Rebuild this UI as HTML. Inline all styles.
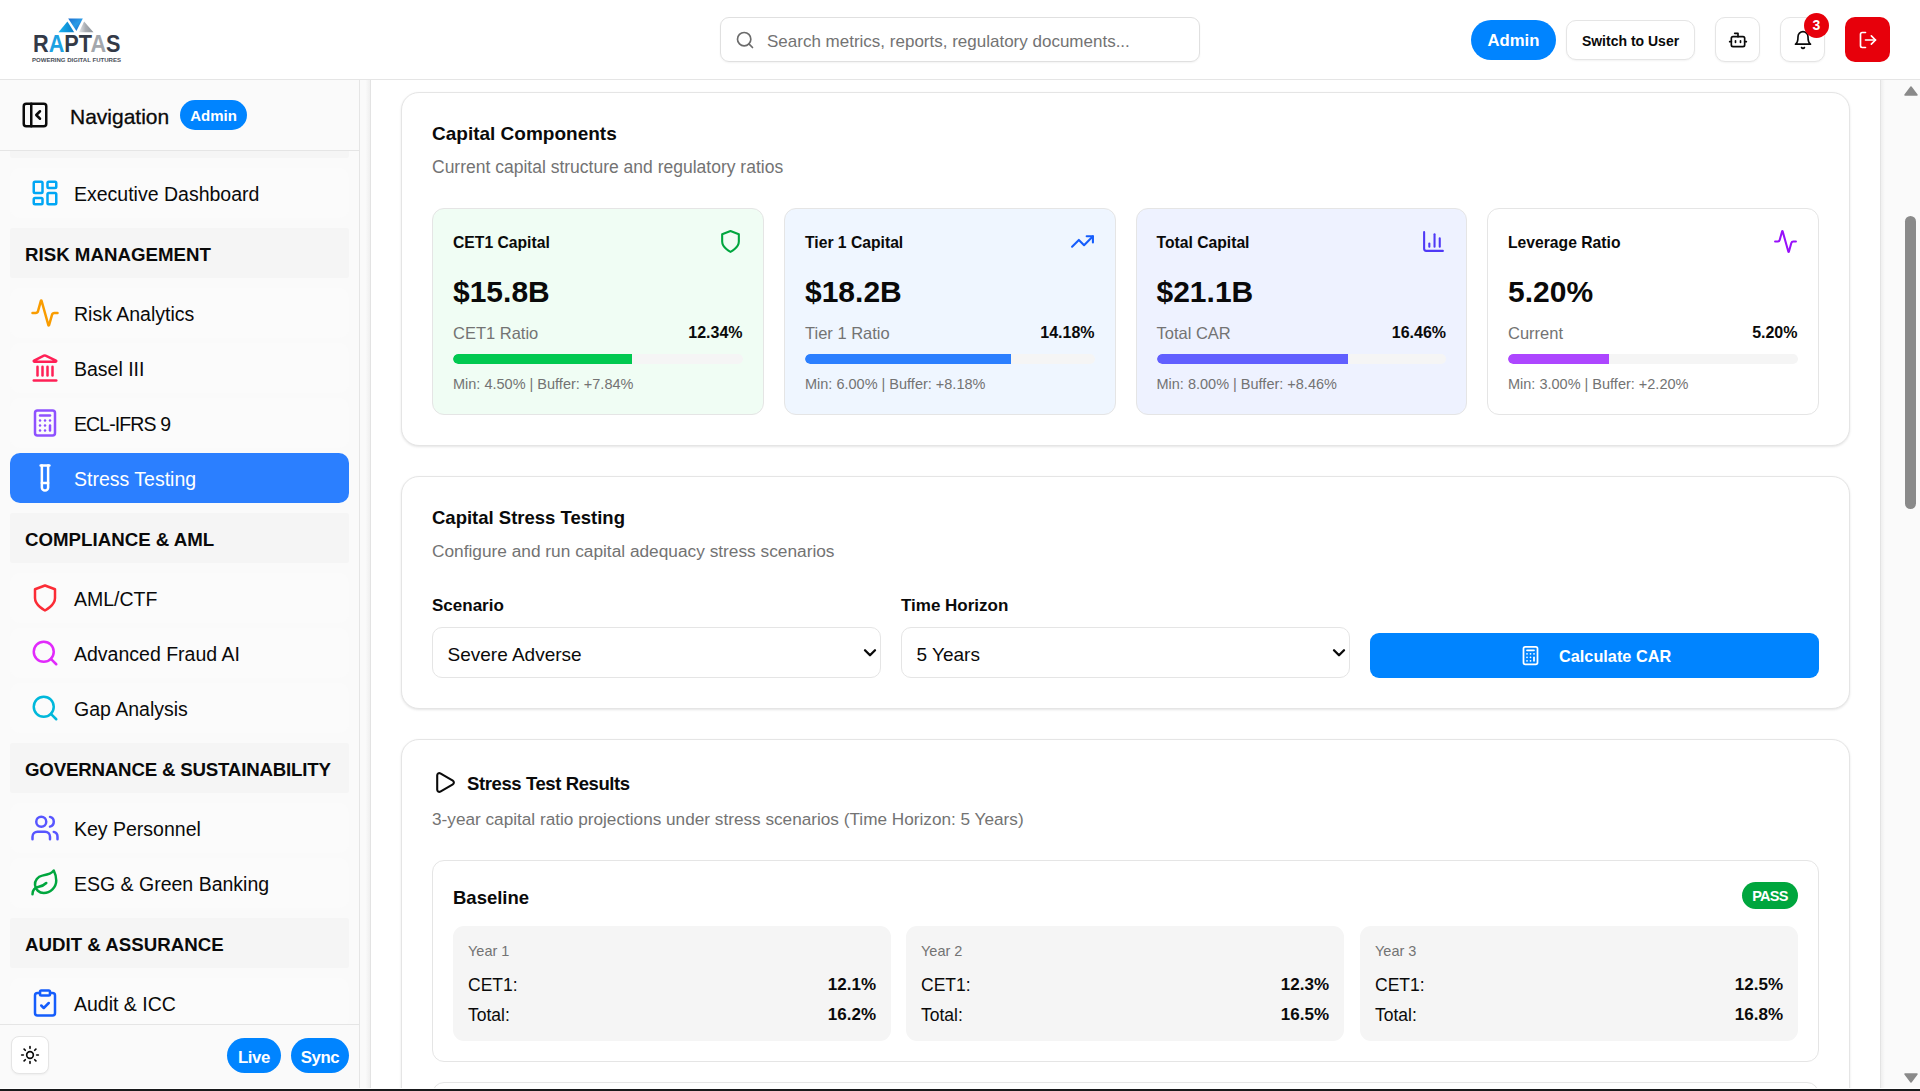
<!DOCTYPE html>
<html><head><meta charset="utf-8">
<style>
*{box-sizing:border-box;margin:0;padding:0}
html,body{width:1920px;height:1091px;overflow:hidden;background:#fff;font-family:"Liberation Sans",sans-serif;color:#0a0a0a}
.abs{position:absolute}
svg{display:block}
.ico{fill:none;stroke:currentColor;stroke-width:2;stroke-linecap:round;stroke-linejoin:round}
/* header */
#hdr{position:absolute;left:0;top:0;width:1920px;height:80px;background:#fff;border-bottom:1px solid #e5e5e5}
.search{position:absolute;left:720px;top:17px;width:480px;height:45px;border:1px solid #e0e0e0;border-radius:9px;box-shadow:0 1px 2px rgba(0,0,0,.05)}
.search .ph{position:absolute;left:46px;top:1.5px;line-height:43px;font-size:17px;color:#737373;white-space:nowrap}
.pill{position:absolute;border-radius:999px;background:#0084ff;color:#fff;font-weight:700;text-align:center;white-space:nowrap}
.btnw{position:absolute;background:#fff;border:1px solid #e5e5e5;border-radius:10px;box-shadow:0 1px 2px rgba(0,0,0,.05)}
/* sidebar */
#side{position:absolute;left:0;top:80px;width:360px;height:1009px;background:#fafafa;border-right:1px solid #e5e5e5;overflow:hidden}
#strip{position:absolute;left:360px;top:80px;width:11px;height:1009px;background:linear-gradient(to right,#fafafa 55%,#efefef);border-right:1px solid #e3e3e3}
.navh{position:absolute;left:0;top:0;width:359px;height:71px;border-bottom:1px solid #e5e5e5}
.sec{position:absolute;left:10px;width:339px;height:50px;background:#f5f5f5;border-radius:2px}
.sec span{position:absolute;left:15px;top:1.5px;line-height:50px;font-size:18.7px;font-weight:700;white-space:nowrap;color:#0a0a0a}
.item{position:absolute;left:10px;width:339px;height:50px;border-radius:10px;background:#fbfbfb}
.item svg{position:absolute;left:20px;top:10px}
.item span{position:absolute;left:64px;top:1px;line-height:50px;font-size:19.5px;white-space:nowrap;color:#0a0a0a}
.item.act{background:#2b7fff}
.item.act span{color:#fff}
.foot{position:absolute;left:0;top:944px;width:359px;height:65px;border-top:1px solid #e5e5e5}
/* scrollbar */
#sb{position:absolute;left:1880px;top:80px;width:40px;height:1009px;background:linear-gradient(to right,#efefef,#fafafa 4px);border-left:1px solid #e3e3e3}
/* main */
.card{position:absolute;left:401px;width:1449px;background:#fff;border:1px solid #e5e5e5;border-radius:18px;box-shadow:0 1px 3px rgba(0,0,0,.07),0 1px 2px rgba(0,0,0,.04)}
.ttl{position:absolute;left:30px;font-size:19px;font-weight:700;white-space:nowrap}
.sub{position:absolute;left:30px;font-size:17.5px;color:#737373;white-space:nowrap}
.stat{position:absolute;top:115px;width:331.5px;height:207px;border:1px solid #e5e5e5;border-radius:12px}
.stat .n{position:absolute;left:20px;top:25px;font-size:15.7px;font-weight:700;white-space:nowrap}
.stat .v{position:absolute;left:20px;top:66px;font-size:30px;font-weight:700;white-space:nowrap}
.stat .l{position:absolute;left:20px;top:115px;font-size:16.5px;color:#737373;white-space:nowrap}
.stat .r{position:absolute;right:20px;top:115px;font-size:16px;font-weight:700;white-space:nowrap}
.stat .bar{position:absolute;left:20px;right:20px;top:145px;height:10px;border-radius:5px;background:#f5f5f5;overflow:hidden}
.stat .bar i{position:absolute;left:0;top:0;bottom:0;border-radius:5px 0 0 5px}
.stat .m{position:absolute;left:20px;top:167px;font-size:14.5px;color:#737373;white-space:nowrap}
.stat svg{position:absolute;right:20px;top:20px}
.lbl{position:absolute;font-size:17px;font-weight:700;white-space:nowrap}
.sel{position:absolute;top:150px;width:449px;height:51px;border:1px solid #e5e5e5;border-radius:10px;background:#fff}
.sel span{position:absolute;left:14.5px;top:1.5px;line-height:49px;font-size:19px;white-space:nowrap}
.sel svg{position:absolute;right:3px;top:20px}
.scn{position:absolute;left:30px;width:1387px;border:1px solid #e5e5e5;border-radius:12px;background:#fff}
.yr{position:absolute;top:65px;width:438px;height:115px;background:#f5f5f5;border-radius:11px}
.yr .y{position:absolute;left:15px;top:17px;font-size:14.5px;color:#737373;white-space:nowrap}
.yr .k{position:absolute;left:15px;font-size:17.5px;white-space:nowrap}
.yr .w{position:absolute;right:15px;font-size:17px;font-weight:700;white-space:nowrap}
</style></head>
<body>
<!-- HEADER -->
<div id="hdr">
  <svg class="abs" style="left:30px;top:17px" width="92" height="46" viewBox="0 0 92 46">
    <defs>
      <linearGradient id="g1" x1="0" y1="0" x2="1" y2="1"><stop offset="0" stop-color="#1c6fd0"/><stop offset=".5" stop-color="#2b9be6"/><stop offset="1" stop-color="#1466c8"/></linearGradient>
      <linearGradient id="g2" x1="0" y1="0" x2="1" y2="0"><stop offset="0" stop-color="#16b4f2"/><stop offset="1" stop-color="#0c7cc6"/></linearGradient>
      <linearGradient id="g3" x1="0" y1="0" x2="1" y2="0"><stop offset="0" stop-color="#e6e8eb"/><stop offset=".45" stop-color="#a9adb3"/><stop offset="1" stop-color="#8c9197"/></linearGradient>
    </defs>
    <polygon points="38.2,1.5 52.8,1.5 46.4,13.9" fill="url(#g1)"/>
    <polygon points="28.5,15.3 44.2,15.3 37.4,4.6" fill="url(#g2)"/>
    <polygon points="49,15.3 63.5,15.3 54.1,4.6" fill="url(#g3)"/>
    <text x="3" y="35.4" font-family="Liberation Sans" font-weight="700" font-size="23.5" textLength="87.5" lengthAdjust="spacingAndGlyphs" fill="#333a47">R<tspan fill="#1da1e2">A</tspan>PT<tspan fill="#a3a7ad">A</tspan>S</text>
    <text x="2" y="44.5" font-family="Liberation Sans" font-weight="700" font-size="5.6" textLength="89" lengthAdjust="spacingAndGlyphs" fill="#4a4f58">POWERING DIGITAL FUTURES</text>
  </svg>
  <div class="search">
    <svg class="abs ico" style="left:14px;top:12px;color:#6b6b6b" width="20" height="20" viewBox="0 0 24 24"><circle cx="11" cy="11" r="8"/><path d="m21 21-4.3-4.3"/></svg>
    <div class="ph">Search metrics, reports, regulatory documents...</div>
  </div>
  <div class="pill" style="left:1471px;top:20px;width:85px;height:40px;line-height:41px;font-size:16.7px">Admin</div>
  <div class="btnw" style="left:1566px;top:20px;width:129px;height:40px;line-height:40px;text-align:center;font-size:14px;font-weight:700">Switch to User</div>
  <div class="btnw" style="left:1715px;top:17px;width:45px;height:45px">
    <svg class="abs ico" style="left:11.5px;top:11.5px" width="20" height="20" viewBox="0 0 24 24"><path d="M12 8V4H8"/><rect width="16" height="12" x="4" y="8" rx="2"/><path d="M2 14h2"/><path d="M20 14h2"/><path d="M15 13v2"/><path d="M9 13v2"/></svg>
  </div>
  <div class="btnw" style="left:1780px;top:17px;width:45px;height:45px">
    <svg class="abs ico" style="left:11.5px;top:11.5px" width="20" height="20" viewBox="0 0 24 24"><path d="M6 8a6 6 0 0 1 12 0c0 7 3 9 3 9H3s3-2 3-9"/><path d="M10.3 21a1.94 1.94 0 0 0 3.4 0"/></svg>
  </div>
  <div class="abs" style="left:1804px;top:13px;width:25px;height:25px;border-radius:50%;background:#e7000b;color:#fff;font-weight:700;font-size:14px;line-height:25px;text-align:center">3</div>
  <div class="abs" style="left:1845px;top:17px;width:45px;height:45px;border-radius:10px;background:#e7000b">
    <svg class="abs ico" style="left:12.5px;top:12.5px;color:#fff" width="20" height="20" viewBox="0 0 24 24"><path d="M9 21H5a2 2 0 0 1-2-2V5a2 2 0 0 1 2-2h4"/><path d="m16 17 5-5-5-5"/><path d="M21 12H9"/></svg>
  </div>
</div>

<!-- SIDEBAR -->
<div id="side">
  <div class="navh">
    <svg class="abs ico" style="left:20px;top:20px" width="30" height="30" viewBox="0 0 24 24"><rect width="18" height="18" x="3" y="3" rx="2"/><path d="M9 3v18"/><path d="m16 15-3-3 3-3"/></svg>
    <div class="abs" style="left:70px;top:1px;line-height:71px;font-size:21px;white-space:nowrap;-webkit-text-stroke:0.3px #0a0a0a">Navigation</div>
    <div class="pill" style="left:180px;top:20px;width:67px;height:30px;line-height:31px;font-size:15px">Admin</div>
  </div>
  <!-- scroll list: offsets relative to sidebar top (80) -->
  <div class="abs" style="left:0;top:71px;width:359px;height:873px;overflow:hidden">
    <div class="sec" style="top:-43px"></div>
    <div class="item" style="top:17px"><svg class="ico" style="color:#00a6f4" width="30" height="30" viewBox="0 0 24 24"><rect width="7" height="9" x="3" y="3" rx="1"/><rect width="7" height="5" x="14" y="3" rx="1"/><rect width="7" height="9" x="14" y="12" rx="1"/><rect width="7" height="5" x="3" y="16" rx="1"/></svg><span>Executive Dashboard</span></div>
    <div class="sec" style="top:77px"><span>RISK MANAGEMENT</span></div>
    <div class="item" style="top:137px"><svg class="ico" style="color:#f99c00" width="30" height="30" viewBox="0 0 24 24"><path d="M22 12h-2.48a2 2 0 0 0-1.93 1.46l-2.35 8.36a.25.25 0 0 1-.48 0L9.24 2.18a.25.25 0 0 0-.48 0l-2.35 8.36A2 2 0 0 1 4.49 12H2"/></svg><span>Risk Analytics</span></div>
    <div class="item" style="top:192px"><svg class="ico" style="color:#ff2056" width="30" height="30" viewBox="0 0 24 24"><path d="M3 22h18"/><path d="M6 18v-7"/><path d="M10 18v-7"/><path d="M14 18v-7"/><path d="M18 18v-7"/><path d="M11.12 2.198a2 2 0 0 1 1.76.006l7.866 3.847c.476.233.31.949-.22.949H3.474c-.53 0-.695-.716-.22-.949z"/></svg><span>Basel III</span></div>
    <div class="item" style="top:247px"><svg class="ico" style="color:#8e51ff" width="30" height="30" viewBox="0 0 24 24"><rect width="16" height="20" x="4" y="2" rx="2"/><path d="M8 6h8"/><path d="M16 14v4"/><path d="M16 10h.01"/><path d="M12 10h.01"/><path d="M8 10h.01"/><path d="M12 14h.01"/><path d="M8 14h.01"/><path d="M12 18h.01"/><path d="M8 18h.01"/></svg><span style="letter-spacing:-0.9px">ECL-IFRS 9</span></div>
    <div class="item act" style="top:302px"><svg class="ico" style="color:#fff" width="30" height="30" viewBox="0 0 24 24"><path d="M14.5 2v17.5c0 1.4-1.1 2.5-2.5 2.5c-1.4 0-2.5-1.1-2.5-2.5V2"/><path d="M8.5 2h7"/><path d="M14.5 16h-5"/></svg><span>Stress Testing</span></div>
    <div class="sec" style="top:362px"><span>COMPLIANCE &amp; AML</span></div>
    <div class="item" style="top:422px"><svg class="ico" style="color:#fb2c36" width="30" height="30" viewBox="0 0 24 24"><path d="M12 22s8-4 8-10V5l-8-3-8 3v7c0 6 8 10 8 10z"/></svg><span>AML/CTF</span></div>
    <div class="item" style="top:477px"><svg class="ico" style="color:#e12afb" width="30" height="30" viewBox="0 0 24 24"><circle cx="11" cy="11" r="8"/><path d="m21 21-4.3-4.3"/></svg><span>Advanced Fraud AI</span></div>
    <div class="item" style="top:532px"><svg class="ico" style="color:#00b8db" width="30" height="30" viewBox="0 0 24 24"><circle cx="11" cy="11" r="8"/><path d="m21 21-4.3-4.3"/></svg><span>Gap Analysis</span></div>
    <div class="sec" style="top:592px"><span style="letter-spacing:-0.2px">GOVERNANCE &amp; SUSTAINABILITY</span></div>
    <div class="item" style="top:652px"><svg class="ico" style="color:#5755ff" width="30" height="30" viewBox="0 0 24 24"><path d="M16 21v-2a4 4 0 0 0-4-4H6a4 4 0 0 0-4 4v2"/><circle cx="9" cy="7" r="4"/><path d="M22 21v-2a4 4 0 0 0-3-3.87"/><path d="M16 3.13a4 4 0 0 1 0 7.75"/></svg><span>Key Personnel</span></div>
    <div class="item" style="top:707px"><svg class="ico" style="color:#00a63e" width="30" height="30" viewBox="0 0 24 24"><path d="M11 20A7 7 0 0 1 9.8 6.1C15.5 5 17 4.48 19 2c1 2 2 4.18 2 8 0 5.5-4.78 10-10 10Z"/><path d="M2 21c0-3 1.85-5.36 5.08-6C9.5 14.52 12 13 13 12"/></svg><span>ESG &amp; Green Banking</span></div>
    <div class="sec" style="top:767px"><span>AUDIT &amp; ASSURANCE</span></div>
    <div class="item" style="top:827px"><svg class="ico" style="color:#155dfc" width="30" height="30" viewBox="0 0 24 24"><rect width="8" height="4" x="8" y="2" rx="1" ry="1"/><path d="M16 4h2a2 2 0 0 1 2 2v14a2 2 0 0 1-2 2H6a2 2 0 0 1-2-2V6a2 2 0 0 1 2-2h2"/><path d="m9 14 2 2 4-4"/></svg><span>Audit &amp; ICC</span></div>
  </div>
  <div class="foot">
    <div class="btnw" style="left:11px;top:11px;width:38px;height:38px;border-radius:8px">
      <svg class="abs ico" style="left:8px;top:8px" width="20" height="20" viewBox="0 0 24 24"><circle cx="12" cy="12" r="4"/><path d="M12 2v2"/><path d="M12 20v2"/><path d="m4.93 4.93 1.41 1.41"/><path d="m17.66 17.66 1.41 1.41"/><path d="M2 12h2"/><path d="M20 12h2"/><path d="m6.34 17.66-1.41 1.41"/><path d="m19.07 4.93-1.41 1.41"/></svg>
    </div>
    <div class="pill" style="left:227px;top:13px;width:54px;height:35px;line-height:35px;padding-top:1.5px;font-size:16.8px;letter-spacing:-0.4px">Live</div>
    <div class="pill" style="left:291px;top:13px;width:58px;height:35px;line-height:35px;padding-top:1.5px;font-size:16.8px;letter-spacing:-0.4px">Sync</div>
  </div>
</div>
<div id="strip"></div>

<!-- SCROLLBAR -->
<div id="sb">
  <svg class="abs" style="left:23px;top:6px" width="14" height="10" viewBox="0 0 14 10"><path d="M7 1 L13 9 L1 9 Z" fill="#8a8a8a" stroke="#8a8a8a" stroke-width="1.5" stroke-linejoin="round"/></svg>
  <div class="abs" style="left:24px;top:136px;width:11px;height:293px;border-radius:6px;background:#8a8a8a"></div>
  <svg class="abs" style="left:23px;top:993px" width="14" height="10" viewBox="0 0 14 10"><path d="M7 9 L13 1 L1 1 Z" fill="#8a8a8a" stroke="#8a8a8a" stroke-width="1.5" stroke-linejoin="round"/></svg>
</div>

<!-- MAIN CARDS -->
<div class="card" style="top:92px;height:354px">
  <div class="ttl" style="top:30px">Capital Components</div>
  <div class="sub" style="top:64px">Current capital structure and regulatory ratios</div>
  <div class="stat" style="left:30px;background:#f0fdf4">
    <div class="n">CET1 Capital</div>
    <svg class="ico" style="color:#00a63e" width="25" height="25" viewBox="0 0 24 24"><path d="M12 22s8-4 8-10V5l-8-3-8 3v7c0 6 8 10 8 10z"/></svg>
    <div class="v">$15.8B</div>
    <div class="l">CET1 Ratio</div><div class="r">12.34%</div>
    <div class="bar"><i style="width:62%;background:#00c950"></i></div>
    <div class="m">Min: 4.50% | Buffer: +7.84%</div>
  </div>
  <div class="stat" style="left:382px;background:#eff6ff">
    <div class="n">Tier 1 Capital</div>
    <svg class="ico" style="color:#155dfc" width="25" height="25" viewBox="0 0 24 24"><polyline points="22 7 13.5 15.5 8.5 10.5 2 17"/><polyline points="16 7 22 7 22 13"/></svg>
    <div class="v">$18.2B</div>
    <div class="l">Tier 1 Ratio</div><div class="r">14.18%</div>
    <div class="bar"><i style="width:71%;background:#2b7fff"></i></div>
    <div class="m">Min: 6.00% | Buffer: +8.18%</div>
  </div>
  <div class="stat" style="left:733.5px;background:#eef2ff">
    <div class="n">Total Capital</div>
    <svg class="ico" style="color:#4f39f6" width="25" height="25" viewBox="0 0 24 24"><path d="M3 3v16a2 2 0 0 0 2 2h16"/><path d="M18 17V9"/><path d="M13 17V5"/><path d="M8 17v-3"/></svg>
    <div class="v">$21.1B</div>
    <div class="l">Total CAR</div><div class="r">16.46%</div>
    <div class="bar"><i style="width:66%;background:#615fff"></i></div>
    <div class="m">Min: 8.00% | Buffer: +8.46%</div>
  </div>
  <div class="stat" style="left:1085px;background:#fff">
    <div class="n">Leverage Ratio</div>
    <svg class="ico" style="color:#9810fa" width="25" height="25" viewBox="0 0 24 24"><path d="M22 12h-2.48a2 2 0 0 0-1.93 1.46l-2.35 8.36a.25.25 0 0 1-.48 0L9.24 2.18a.25.25 0 0 0-.48 0l-2.35 8.36A2 2 0 0 1 4.49 12H2"/></svg>
    <div class="v">5.20%</div>
    <div class="l">Current</div><div class="r">5.20%</div>
    <div class="bar"><i style="width:35%;background:#ad46ff"></i></div>
    <div class="m">Min: 3.00% | Buffer: +2.20%</div>
  </div>
</div>

<div class="card" style="top:476px;height:233px">
  <div class="ttl" style="top:30px;font-size:18.5px">Capital Stress Testing</div>
  <div class="sub" style="top:64px;font-size:17.3px">Configure and run capital adequacy stress scenarios</div>
  <div class="lbl" style="left:30px;top:119px">Scenario</div>
  <div class="lbl" style="left:499px;top:119px">Time Horizon</div>
  <div class="sel" style="left:30px"><span>Severe Adverse</span><svg style="fill:none;stroke:#0a0a0a;stroke-width:2.3;stroke-linecap:round;stroke-linejoin:round" width="14" height="10" viewBox="0 0 14 10"><path d="M2 2.2 7 7.3 12 2.2"/></svg></div>
  <div class="sel" style="left:499px"><span>5 Years</span><svg style="fill:none;stroke:#0a0a0a;stroke-width:2.3;stroke-linecap:round;stroke-linejoin:round" width="14" height="10" viewBox="0 0 14 10"><path d="M2 2.2 7 7.3 12 2.2"/></svg></div>
  <div class="abs" style="left:968px;top:156px;width:449px;height:45px;border-radius:9px;background:#0084ff;color:#fff">
    <svg class="abs ico" style="left:150px;top:12px;color:#fff" width="21" height="21" viewBox="0 0 24 24"><rect width="16" height="20" x="4" y="2" rx="2"/><path d="M8 6h8"/><path d="M16 14v4"/><path d="M16 10h.01"/><path d="M12 10h.01"/><path d="M8 10h.01"/><path d="M12 14h.01"/><path d="M8 14h.01"/><path d="M12 18h.01"/><path d="M8 18h.01"/></svg>
    <div class="abs" style="left:189px;top:1px;line-height:45px;font-size:16.3px;font-weight:700;white-space:nowrap">Calculate CAR</div>
  </div>
</div>

<div class="card" style="top:739px;height:420px">
  <svg class="abs ico" style="left:30px;top:30px" width="25" height="25" viewBox="0 0 24 24"><path d="M5 5a2 2 0 0 1 3.008-1.728l11.997 6.998a2 2 0 0 1 .003 3.458l-12 7A2 2 0 0 1 5 19z"/></svg>
  <div class="ttl" style="left:65px;top:33px;font-size:18.5px;letter-spacing:-0.4px">Stress Test Results</div>
  <div class="sub" style="top:69px;font-size:17.2px">3-year capital ratio projections under stress scenarios (Time Horizon: 5 Years)</div>
  <div class="scn" style="top:120px;height:202px">
    <div class="abs" style="left:20px;top:26px;font-size:18.5px;font-weight:700">Baseline</div>
    <div class="abs" style="right:20px;top:21px;width:56px;height:27px;border-radius:14px;background:#00a63e;color:#fff;font-size:14.5px;font-weight:700;line-height:29px;letter-spacing:-0.7px;text-align:center">PASS</div>
    <div class="yr" style="left:20px"><div class="y">Year 1</div><div class="k" style="top:49px">CET1:</div><div class="w" style="top:49px">12.1%</div><div class="k" style="top:79px">Total:</div><div class="w" style="top:79px">16.2%</div></div>
    <div class="yr" style="left:473px"><div class="y">Year 2</div><div class="k" style="top:49px">CET1:</div><div class="w" style="top:49px">12.3%</div><div class="k" style="top:79px">Total:</div><div class="w" style="top:79px">16.5%</div></div>
    <div class="yr" style="left:927px"><div class="y">Year 3</div><div class="k" style="top:49px">CET1:</div><div class="w" style="top:49px">12.5%</div><div class="k" style="top:79px">Total:</div><div class="w" style="top:79px">16.8%</div></div>
  </div>
  <div class="scn" style="top:342px;height:202px"></div>
</div>

<div class="abs" style="left:0;top:1088px;width:1920px;height:1px;background:#fff"></div>
<div class="abs" style="left:0;top:1089px;width:1920px;height:2px;background:#18191b"></div>
</body></html>
